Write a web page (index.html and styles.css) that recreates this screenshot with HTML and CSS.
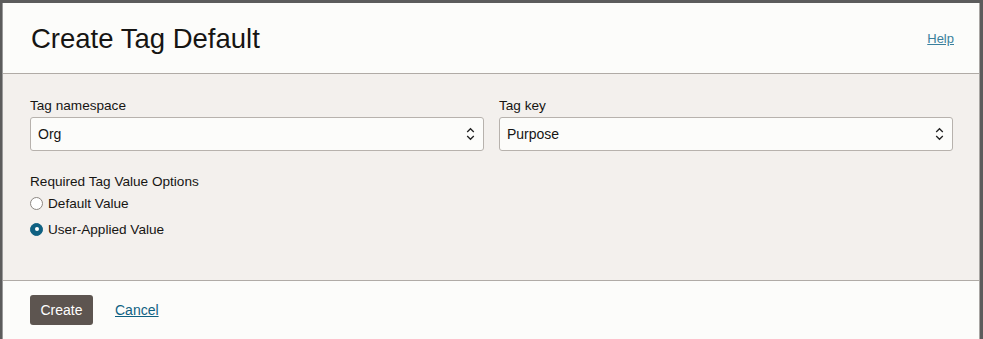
FILE: index.html
```html
<!DOCTYPE html>
<html>
<head>
<meta charset="utf-8">
<link rel="stylesheet" href="styles.css">
</head>
<body>
<div class="dialog">
  <header class="head">
    <h1 class="title">Create Tag Default</h1>
    <a class="help" href="#">Help</a>
  </header>
  <main class="body">
    <div class="row">
      <div class="field">
        <label class="label">Tag namespace</label>
        <div class="select"><span>Org</span>
          <svg class="chev" width="9" height="16" viewBox="0 0 9 16"><path d="M1.2 6 4.5 2.7 7.8 6M1.2 10 4.5 13.3 7.8 10" fill="none" stroke="#222" stroke-width="1.3"/></svg>
        </div>
      </div>
      <div class="field">
        <label class="label">Tag key</label>
        <div class="select"><span>Purpose</span>
          <svg class="chev" width="9" height="16" viewBox="0 0 9 16"><path d="M1.2 6 4.5 2.7 7.8 6M1.2 10 4.5 13.3 7.8 10" fill="none" stroke="#222" stroke-width="1.3"/></svg>
        </div>
      </div>
    </div>
    <div class="group">
      <div class="label">Required Tag Value Options</div>
      <div class="radio"><span class="dot"></span>Default Value</div>
      <div class="radio"><span class="dot on"></span>User-Applied Value</div>
    </div>
  </main>
  <footer class="foot">
    <button class="btn">Create</button>
    <a class="cancel" href="#">Cancel</a>
  </footer>
</div>
</body>
</html>
```
FILE: styles.css
```css
html, body { margin: 0; height: 100%; }
body {
  background: #5c5c5c;
  font-family: "Liberation Sans", Arial, sans-serif;
  color: #161513;
  padding: 3px 3px 0 2px;
  box-sizing: border-box;
  overflow: hidden;
}
.dialog {
  background: #fcfcfa;
  height: 336px;
  display: flex;
  flex-direction: column;
  border-left: 1px solid #9a9a9a;
  border-right: 1px solid #a8a6a3;
}
.head {
  height: 70px;
  display: flex;
  align-items: center;
  justify-content: space-between;
  padding: 0 25px 0 28px;
  border-bottom: 1px solid #b0aba6;
}
.title {
  margin: 0;
  font-size: 27.5px;
  font-weight: 400;
  padding-top: 1px;
}
.help {
  font-size: 13px;
  color: #3a7f9c;
  text-decoration: underline;
}
.body {
  background: #f3f0ed;
  height: 207px;
  padding: 24px 26px 0 27px;
  box-sizing: border-box;
  border-bottom: 1px solid #b0aba6;
}
.row {
  display: flex;
  gap: 15px;
}
.field { flex: 1; }
.label {
  display: block;
  font-size: 13.6px;
  line-height: 16px;
  margin-bottom: 3px;
}
.select {
  height: 34px;
  box-sizing: border-box;
  border: 1px solid #b7b2ad;
  border-radius: 3px;
  background: #fcfcfa;
  display: flex;
  align-items: center;
  justify-content: space-between;
  padding: 0 8px 0 7px;
  font-size: 14px;
}
.chev { display: block; }
.group { margin-top: 23px; }
.group .label { margin-bottom: 5px; }
.radio {
  display: flex;
  align-items: center;
  gap: 5px;
  font-size: 13.6px;
  height: 16px;
  margin-bottom: 10px;
}
.dot {
  width: 13px;
  height: 13px;
  border-radius: 50%;
  border: 1px solid #8c8782;
  background: #fff;
  box-sizing: border-box;
  display: inline-block;
  position: relative;
}
.dot.on {
  background: #0f6182;
  border-color: #0f6182;
}
.dot.on::after {
  content: "";
  position: absolute;
  left: 3.5px;
  top: 3.5px;
  width: 4px;
  height: 4px;
  border-radius: 50%;
  background: #fff;
}
.foot {
  flex: 1;
  display: flex;
  align-items: flex-start;
  padding: 14px 0 0 27px;
  gap: 22px;
}
.btn {
  background: #5d5550;
  color: #fff;
  border: none;
  border-radius: 3px;
  height: 30px;
  width: 63px;
  font-family: inherit;
  font-size: 14px;
  padding: 0;
}
.cancel {
  font-size: 14px;
  color: #0f6182;
  text-decoration: underline;
  line-height: 30px;
}
```
